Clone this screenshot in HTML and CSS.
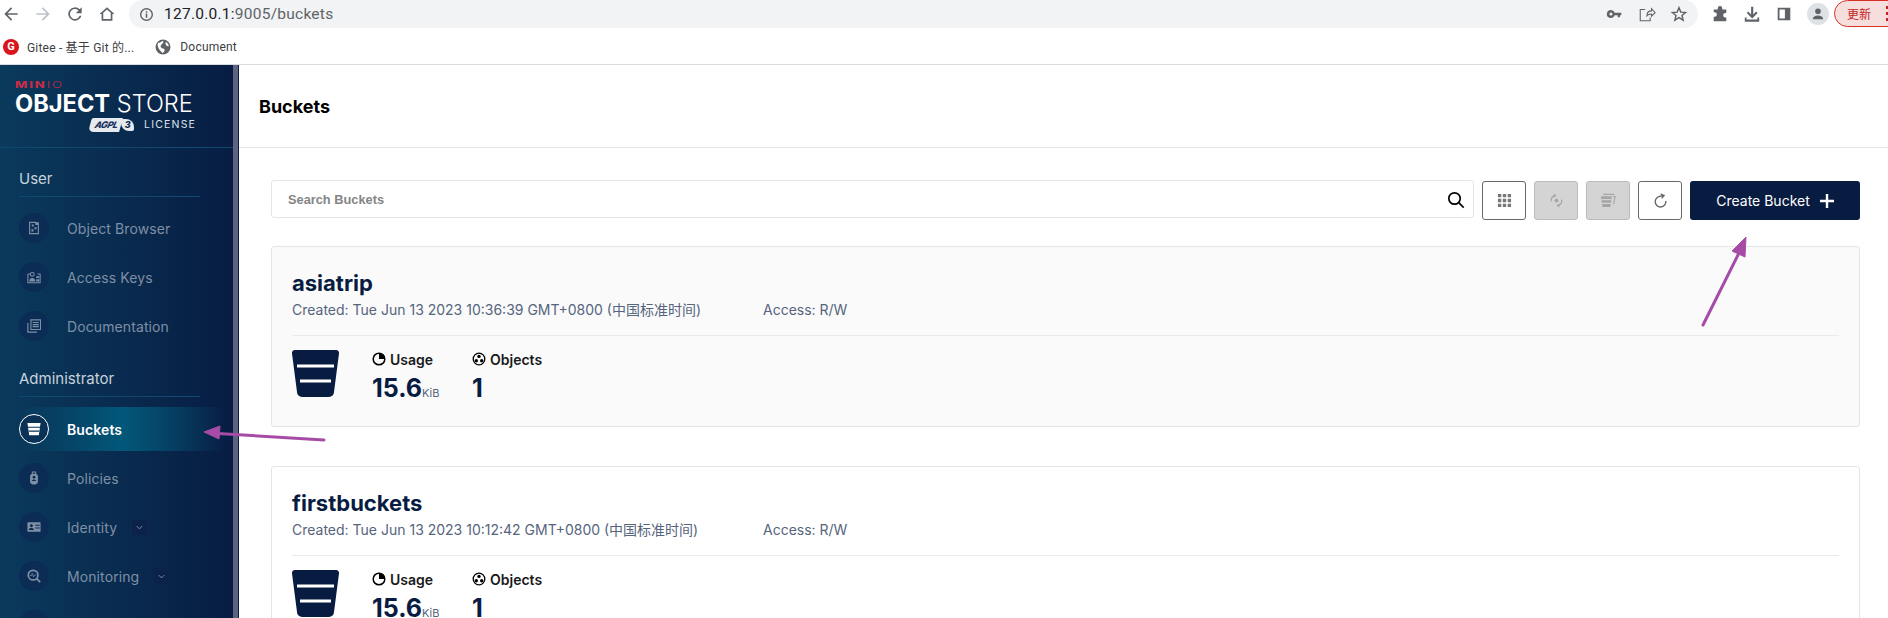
FILE: index.html
```html
<!DOCTYPE html>
<html lang="en">
<head>
    <meta charset="UTF-8">
    <meta name="viewport" content="width=device-width, initial-scale=1.0">
    <title>Buckets</title>
    <link rel="stylesheet" href="styles.css">
</head>
<body>
    <!-- browser toolbar -->
    <div class="toolbar">
        <div class="nav-icons">
            <svg class="nav-icon" viewBox="0 0 24 24"><path d="M20 11H7.8l5.6-5.6L12 4l-8 8 8 8 1.4-1.4L7.8 13H20z" fill="#5f6368"/></svg>
            <svg class="nav-icon" viewBox="0 0 24 24"><path d="M4 11h12.2l-5.6-5.6L12 4l8 8-8 8-1.4-1.4 5.6-5.6H4z" fill="#bdc1c6"/></svg>
            <svg class="nav-icon" viewBox="0 0 24 24"><path d="M17.6 6.4A8 8 0 1 0 19.7 14h-2.1a6 6 0 1 1-1.4-6.2L13 11h7V4z" fill="#5f6368"/></svg>
            <svg class="nav-icon" viewBox="0 0 24 24"><path d="M12 4 3 12h2.5v8h13v-8H21zm4.500 14h-9v-7.600L12 6.600l4.500 3.800z" fill="#5f6368"/></svg>
        </div>
        <div class="omnibox">
            <svg class="info-icon" viewBox="0 0 16 16"><circle cx="8" cy="8" r="6.200" fill="none" stroke="#5f6368" stroke-width="1.500"/><path d="M7.200 7h1.600v4.500H7.200zM7.200 4.500h1.600v1.500H7.200z" fill="#5f6368"/></svg>
            <span class="url">127.0.0.1:<span class="url-dim">9005/buckets</span></span>
            <div class="omni-right">
                <svg class="omni-icon" viewBox="0 0 20 20"><path d="M5.500 5.500a4.500 4.500 0 1 0 4.200 6H13v2h2.500v-2H17V8.500H9.700a4.500 4.500 0 0 0-4.200-3zm0 2.800a1.700 1.700 0 1 1 0 3.400 1.700 1.700 0 0 1 0-3.400z" fill="#5f6368"/></svg>
                <svg class="omni-icon" viewBox="0 0 20 20"><path d="M8 5H2.500v12.500h11V14M10 12c0-3.500 2-5.500 5-5.500V4l4 4.500-4 4V10c-2 0-4 .5-5 2z" fill="none" stroke="#5f6368" stroke-width="1.200"/></svg>
                <svg class="omni-icon" viewBox="0 0 20 20"><path d="m10 3 2 4.900 5.300.4-4 3.400 1.300 5.100-4.600-2.800-4.600 2.800 1.300-5.100-4-3.400 5.300-.4z" fill="none" stroke="#5f6368" stroke-width="1.600"/></svg>
            </div>
        </div>
        <div class="tool-right">
            <svg class="tool-icon" viewBox="0 0 20 20"><path d="M7.500 3.500a2.500 2.500 0 0 1 5 0V5h4.500v4h-1a2.500 2.500 0 0 0 0 5h1v4H3v-5h1a2.500 2.500 0 0 0 0-5H3V5h4.500z" fill="#5f6368"/></svg>
            <svg class="tool-icon" viewBox="0 0 20 20"><path d="M9 2h2.400v8.500l3.200-3.200 1.600 1.600-6 6-6-6 1.600-1.600L9 10.500zM2 14h2v2.200h12V14h2v4.500H2z" fill="#5f6368"/></svg>
            <svg class="tool-icon" viewBox="0 0 20 20"><path d="M3 3h14v14H3zm2 2v10h6V5z" fill="#5f6368" fill-rule="evenodd"/></svg>
            <div class="avatar">
                <svg viewBox="0 0 20 20"><circle cx="10" cy="6.500" r="3.500" fill="#5f6368"/><path d="M3.500 16.500c0-3 3-4.500 6.500-4.500s6.500 1.500 6.500 4.500z" fill="#5f6368"/></svg>
            </div>
            <div class="update-pill">
                <span>更新</span>
                <span class="pill-dots"><i></i><i></i><i></i></span>
            </div>
        </div>
    </div>

    <!-- bookmarks -->
    <div class="bookmarks">
        <div class="bookmark">
            <span class="gitee-logo">G</span>
            <span>Gitee - 基于 Git 的...</span>
        </div>
        <div class="bookmark">
            <svg class="globe" viewBox="0 0 16 16"><circle cx="8" cy="8" r="7.500" fill="#5f6368"/><path d="M3 4c2 0 3-1.500 5-2 1 1 0 2-1 3S5 7 6 8.500s3 .5 3.500 2-1 3-2 3.500C6 12 4 11 3.500 9S2 6 3 4zM11 3c1.500.8 2.500 2.500 2.800 4-1 .5-2.500 0-3-1.500S10.500 4 11 3z" fill="#fff"/></svg>
            <span>Document</span>
        </div>
    </div>

    <div class="app">
        <aside class="sidebar">
            <div class="logo-area">
                <div class="logo-minio">MIN<span class="logo-io">IO</span></div>
                <div class="logo-main"><b>OBJECT</b> STORE</div>
                <div class="logo-license">
                    <span class="agpl"><span class="agpl-text">AGPL</span><span class="agpl-three">3</span></span>
                    <span>LICENSE</span>
                </div>
            </div>
            <div class="menu">
                <div class="menu-title">User</div>
                <div class="menu-item">
                    <span class="menu-circle"><svg viewBox="0 0 16 16"><path d="M3 1.500h7l3 3v10H3z" fill="none" stroke="currentColor" stroke-width="1.300"/><path d="M9.500 1.500h4v3h-4zM5.500 4h2.200v2.200H5.500zM8.500 7h2.500v2.500H8.500zM5 9.500h2.500V12H5z" fill="currentColor"/></svg></span>
                    <span>Object Browser</span>
                </div>
                <div class="menu-item">
                    <span class="menu-circle"><svg viewBox="0 0 16 16"><path d="M1 4.500h3M12 4.500h3v10H1v-10" fill="none" stroke="currentColor" stroke-width="1.200"/><circle cx="6" cy="5" r="2.200" fill="none" stroke="currentColor" stroke-width="1.200"/><path d="M2.500 13c0-5 7-5 7 0zM10.500 7H14v2h-3.500zM10.500 10.500H14V13h-3.500z" fill="currentColor"/></svg></span>
                    <span>Access Keys</span>
                </div>
                <div class="menu-item">
                    <span class="menu-circle"><svg viewBox="0 0 16 16"><path d="M4.500 1h11v11h-11zM1 4.500V15h10.500" fill="none" stroke="currentColor" stroke-width="1.300"/><path d="M6.500 3.500h7v1.200h-7zM6.500 5.800h7V7h-7zM6.500 8.100h7v1.200h-7z" fill="currentColor"/></svg></span>
                    <span>Documentation</span>
                </div>
                <div class="menu-title admin">Administrator</div>
                <div class="menu-item active">
                    <span class="menu-circle"><svg viewBox="0 0 16 16"><path d="M.5 1h15L13.500 15h-11z" fill="currentColor"/><path d="M1 6h14M2 10.500h12" stroke="#0a3156" stroke-width="1.300"/></svg></span>
                    <span>Buckets</span>
                </div>
                <div class="menu-item">
                    <span class="menu-circle"><svg viewBox="0 0 16 16"><path d="M5.500 3V.5h5V3h-1.200V1.800H6.700V3c-2 0-3.200 1.500-3.200 3v6c0 2.500 2 3.500 4.500 3.500s4.500-1 4.500-3.500V6c0-1.500-1.200-3-3.200-3z" fill="currentColor"/><circle cx="8" cy="7" r="1.600" fill="#0a2c50"/><path d="M5.500 11.500c0-2.500 5-2.500 5 0z" fill="#0a2c50"/></svg></span>
                    <span>Policies</span>
                </div>
                <div class="menu-item">
                    <span class="menu-circle"><svg viewBox="0 0 16 16"><path d="M1 2.500h14a1 1 0 0 1 .500.500v10l-.500.500H1L.5 13V3z" fill="currentColor"/><circle cx="5" cy="6.500" r="1.700" fill="#0a2c50"/><path d="M2 11.500c0-3 6-3 6 0zM9.500 5.500h5v1.200h-5zM9.500 8.500h5v1.200h-5z" fill="#0a2c50"/></svg></span>
                    <span>Identity</span>
                    <span class="chevron"><svg viewBox="0 0 10 10"><path d="m2 3.500 3 3 3-3" fill="none" stroke="currentColor" stroke-width="1"/></svg></span>
                </div>
                <div class="menu-item">
                    <span class="menu-circle"><svg viewBox="0 0 16 16"><circle cx="7" cy="7" r="5.500" fill="none" stroke="currentColor" stroke-width="2"/><path d="m10.500 10.500 4.500 4.500" stroke="currentColor" stroke-width="2.200"/><path d="M3.500 7.500h1.500l1-2.500 1.500 4 1-2h2" fill="none" stroke="currentColor" stroke-width=".9"/></svg></span>
                    <span>Monitoring</span>
                    <span class="chevron"><svg viewBox="0 0 10 10"><path d="m2 3.500 3 3 3-3" fill="none" stroke="currentColor" stroke-width="1"/></svg></span>
                </div>
                <div class="menu-item">
                    <span class="menu-circle"></span>
                </div>
            </div>
        </aside>

        <main class="main">
            <div class="page-header">Buckets</div>
            <div class="content">
                <div class="actions">
                    <div class="search">
                        <span>Search Buckets</span>
                        <svg class="search-icon" viewBox="0 0 18 18"><circle cx="7.500" cy="7.500" r="5.700" fill="none" stroke="#000" stroke-width="1.700"/><path d="m11.700 11.700 5 5" stroke="#000" stroke-width="1.700"/></svg>
                    </div>
                    <button class="icon-btn">
                        <svg viewBox="0 0 16 16"><path d="M1 1h3.600v3.600H1zM6.200 1h3.600v3.600H6.200zM11.400 1H15v3.600h-3.600zM1 6.200h3.600v3.600H1zM6.200 6.200h3.600v3.600H6.200zM11.400 6.200H15v3.600h-3.600zM1 11.400h3.600V15H1zM6.200 11.400h3.600V15H6.200zM11.400 11.400H15V15h-3.600z" fill="#777"/></svg>
                    </button>
                    <button class="icon-btn disabled">
                        <svg viewBox="0 0 16 16"><circle cx="8" cy="8" r="2" fill="#a5a5a5"/><path d="M2.500 9A5.500 5.500 0 0 1 6 2.800M13.500 7A5.500 5.500 0 0 1 10 13.200" fill="none" stroke="#a5a5a5" stroke-width="1.300"/><path d="m5 .5 3 2.300-3 2zM11 15.500l-3-2.300 3-2z" fill="#a5a5a5"/></svg>
                    </button>
                    <button class="icon-btn disabled">
                        <svg viewBox="0 0 16 16"><path d="M0 3.500h11.500L10 15H1.500z" fill="#a5a5a5"/><path d="M2.500 1.500H14M12.500 3.500h2.500L13.500 12" fill="none" stroke="#a5a5a5" stroke-width="1.200"/><path d="M.5 7h10.500M1 11h9.500" stroke="#d3d4d3" stroke-width="1.200"/></svg>
                    </button>
                    <button class="icon-btn">
                        <svg viewBox="0 0 16 16"><path d="M8.500 3.500a5.700 5.700 0 1 0 5.200 5" fill="none" stroke="#696969" stroke-width="1.500"/><path d="m8 .2 5 2.300-3.500 3.800z" fill="#696969"/></svg>
                    </button>
                    <button class="create-btn">
                        <span>Create Bucket</span>
                        <svg viewBox="0 0 14 14"><path d="M5.800 0h2.400v5.800H14v2.400H8.200V14H5.800V8.200H0V5.800h5.800z" fill="#fff"/></svg>
                    </button>
                </div>

                <div class="bucket-card highlighted">
                    <div class="bucket-name">asiatrip</div>
                    <div class="bucket-meta">
                        <span class="created">Created: Tue Jun 13 2023 10:36:39 GMT+0800 (中国标准时间)</span>
                        <span>Access: R/W</span>
                    </div>
                    <div class="bucket-stats">
                        <svg class="bucket-icon" viewBox="0 0 47 47"><path d="M3 0h41a3 3 0 0 1 3 3.500L42 42a5 5 0 0 1-5 5H10a5 5 0 0 1-5-5L0 3.500A3 3 0 0 1 3 0z" fill="#081c42"/><path d="M5 16h37M8 31h31" stroke="#fff" stroke-width="3"/></svg>
                        <div class="stat usage">
                            <div class="stat-label">
                                <svg viewBox="0 0 14 14"><circle cx="7" cy="7" r="5.800" fill="none" stroke="#000" stroke-width="1.500"/><path d="M7 7V1.200A5.800 5.800 0 0 1 12.800 7z" fill="#000"/></svg>
                                <span>Usage</span>
                            </div>
                            <div class="stat-value">15.6<span class="stat-unit">KiB</span></div>
                        </div>
                        <div class="stat">
                            <div class="stat-label">
                                <svg viewBox="0 0 14 14"><circle cx="7" cy="7" r="5.800" fill="none" stroke="#000" stroke-width="1.300"/><circle cx="7" cy="4.400" r="1.700"/><circle cx="4.300" cy="8.800" r="1.700"/><circle cx="9.700" cy="8.800" r="1.700"/></svg>
                                <span>Objects</span>
                            </div>
                            <div class="stat-value">1</div>
                        </div>
                    </div>
                </div>

                <div class="bucket-card">
                    <div class="bucket-name">firstbuckets</div>
                    <div class="bucket-meta">
                        <span class="created">Created: Tue Jun 13 2023 10:12:42 GMT+0800 (中国标准时间)</span>
                        <span>Access: R/W</span>
                    </div>
                    <div class="bucket-stats">
                        <svg class="bucket-icon" viewBox="0 0 47 47"><path d="M3 0h41a3 3 0 0 1 3 3.500L42 42a5 5 0 0 1-5 5H10a5 5 0 0 1-5-5L0 3.500A3 3 0 0 1 3 0z" fill="#081c42"/><path d="M5 16h37M8 31h31" stroke="#fff" stroke-width="3"/></svg>
                        <div class="stat usage">
                            <div class="stat-label">
                                <svg viewBox="0 0 14 14"><circle cx="7" cy="7" r="5.800" fill="none" stroke="#000" stroke-width="1.500"/><path d="M7 7V1.200A5.800 5.800 0 0 1 12.800 7z" fill="#000"/></svg>
                                <span>Usage</span>
                            </div>
                            <div class="stat-value">15.6<span class="stat-unit">KiB</span></div>
                        </div>
                        <div class="stat">
                            <div class="stat-label">
                                <svg viewBox="0 0 14 14"><circle cx="7" cy="7" r="5.800" fill="none" stroke="#000" stroke-width="1.300"/><circle cx="7" cy="4.400" r="1.700"/><circle cx="4.300" cy="8.800" r="1.700"/><circle cx="9.700" cy="8.800" r="1.700"/></svg>
                                <span>Objects</span>
                            </div>
                            <div class="stat-value">1</div>
                        </div>
                    </div>
                </div>
            </div>
        </main>
    </div>

    <!-- annotation arrows drawn over the page -->
    <svg class="arrows" viewBox="0 0 1888 618">
        <path d="M324 440 218 433.500" stroke="#a64ca6" stroke-width="3" stroke-linecap="round"/>
        <path d="m204 432 16-6-1 13z" fill="#a64ca6" stroke="#a64ca6"/>
        <path d="m1703 325 37-74" stroke="#a64ca6" stroke-width="3" stroke-linecap="round"/>
        <path d="m1746 237-1 20-13-6z" fill="#a64ca6" stroke="#a64ca6"/>
    </svg>
</body>
</html>
```

FILE: styles.css
```css
* {
    box-sizing: border-box;
}
html, body {
    height: 618px;
}
body {
    margin: 0;
    position: relative;
    overflow: hidden;
    background-color: #fff;
    font-family: Inter, "Noto Sans CJK SC", sans-serif;
}

/* browser chrome */
.toolbar {
    height: 28px;
    display: flex;
    align-items: center;
    font-family: Roboto, "Noto Sans CJK SC", sans-serif;
}
.nav-icons {
    width: 129px;
    flex: none;
    padding-left: 1px;
    display: flex;
    gap: 12px;
}
.nav-icon {
    width: 20px;
    height: 20px;
}
.omnibox {
    width: 1569px;
    flex: none;
    height: 28px;
    padding: 0 10px;
    display: flex;
    align-items: center;
    background-color: #f1f3f4;
    border-radius: 14px;
}
.info-icon {
    width: 15px;
    height: 15px;
}
.url {
    margin-left: 10px;
    font-size: 15.500px;
    letter-spacing: .25px;
    color: #202124;
}
.url-dim {
    color: #5f6368;
}
.omni-right {
    margin-left: auto;
    display: flex;
    gap: 14px;
}
.omni-icon {
    width: 18px;
    height: 18px;
}
.tool-right {
    flex: none;
    width: 190px;
    display: flex;
    align-items: center;
    padding-left: 13px;
    gap: 12px;
}
.tool-icon {
    width: 18px;
    height: 18px;
    margin-right: 2px;
    flex: none;
}
.avatar {
    width: 22px;
    height: 22px;
    flex: none;
    border-radius: 50%;
    background-color: #dee1e6;
    padding: 3px;
}
.avatar svg {
    display: block;
}
.update-pill {
    flex: none;
    width: 72px;
    height: 27px;
    margin-top: -1px;
    margin-left: -7px;
    padding-left: 12px;
    display: flex;
    align-items: center;
    gap: 15px;
    font-size: 12px;
    color: #c5221f;
    background-color: #f6dedc;
    border: 1px solid #d93025;
    border-radius: 14px;
}
.pill-dots {
    display: flex;
    flex-direction: column;
    gap: 3px;
}
.pill-dots i {
    display: block;
    width: 3px;
    height: 3px;
    background-color: #c5221f;
}
.bookmarks {
    height: 37px;
    padding: 1px 0 0 3px;
    display: flex;
    align-items: center;
    gap: 21px;
    border-bottom: 1px solid #dadce0;
    font-family: Roboto, "Noto Sans CJK SC", sans-serif;
    font-size: 12px;
    color: #3c4043;
}
.bookmark {
    display: flex;
    align-items: center;
    gap: 8px;
    letter-spacing: .2px;
}
.gitee-logo {
    width: 16px;
    height: 16px;
    border-radius: 50%;
    background-color: #d8141d;
    color: #fff;
    font-size: 11px;
    font-weight: bold;
    line-height: 16px;
    text-align: center;
}
.globe {
    width: 16px;
    height: 16px;
    margin-right: 1px;
}

/* app */
.app {
    display: flex;
    height: 553px;
}
.sidebar {
    width: 239px;
    flex: none;
    background: linear-gradient(90deg, #0a3a5c 0%, #081c42 100%);
    border-right: 1px solid #081c42;
    box-shadow: inset -5px 0 0 #5d6380;
    overflow: hidden;
    color: #fff;
}
.logo-area {
    height: 83px;
    padding: 15px 0 0 15px;
    width: 233px;
    border-bottom: 1px solid #0f4a6e;
}
.logo-minio {
    font-size: 9px;
    line-height: 9px;
    font-weight: 800;
    letter-spacing: 1.300px;
    color: #c72c48;
    transform: scaleX(1.450);
    transform-origin: left center;
}
.logo-io {
    font-weight: 300;
}
.logo-main {
    margin-top: 2px;
    font-size: 23.600px;
    line-height: 25px;
    font-weight: 300;
    white-space: nowrap;
}
.logo-main b {
    font-weight: 700;
}
.logo-license {
    margin: 1px 0 0 75px;
    display: flex;
    align-items: center;
    gap: 8px;
    font-size: 10.500px;
    letter-spacing: 1.200px;
    line-height: 15px;
    color: #dfe3ea;
}
.agpl {
    width: 46px;
    height: 15px;
    flex: none;
    display: flex;
    align-items: center;
    font-size: 9px;
    font-style: italic;
    font-weight: 800;
    letter-spacing: -.4px;
}
.agpl-text {
    padding: 0 3px 0 5px;
    line-height: 14px;
    color: #16305c;
    background-color: #e6e9ee;
    border-radius: 2px 0 0 5px;
    transform: skewX(-15deg);
}
.agpl-three {
    height: 12px;
    padding: 0 4px;
    line-height: 12px;
    color: #0a2a50;
    background-color: #e6e9ee;
    border-radius: 2px 8px 2px 8px;
}
.menu {
    padding: 20px 0 0 19px;
    width: 233px;
}
.menu-title {
    width: 181px;
    height: 29px;
    font-size: 15px;
    line-height: 22px;
    color: #c8d2dc;
    border-bottom: 1px solid #0f4a6e;
    margin-bottom: 9px;
}
.menu-title.admin {
    margin-top: 20px;
    margin-bottom: 10px;
}
.menu-item {
    height: 44px;
    margin-bottom: 5px;
    display: flex;
    align-items: center;
    gap: 18px;
    font-size: 14px;
    color: #7f8fa6;
    letter-spacing: .1px;
}
.menu-item.active {
    margin-right: 8px;
    font-weight: 600;
    color: #fff;
    background: linear-gradient(90deg, rgba(2, 88, 122, 0) 0%, #02587a 50%, rgba(2, 88, 122, 0) 100%);
}
.menu-circle {
    width: 30px;
    height: 30px;
    flex: none;
    border-radius: 50%;
    background-color: #0a2c55;
    display: flex;
    align-items: center;
    justify-content: center;
}
.menu-circle svg {
    width: 14px;
    height: 14px;
}
.menu-item.active .menu-circle {
    background-color: #0a3156;
    border: 1px solid #fff;
}
.chevron {
    width: 15px;
    height: 15px;
    margin-left: -3px;
    padding: 3px;
    color: #8fa0b8;
    background-color: #0c2248;
}
.chevron svg {
    display: block;
}

/* main area */
.main {
    flex: 1;
    min-width: 0;
}
.page-header {
    height: 83px;
    padding: 32px 0 0 20px;
    font-size: 18px;
    font-weight: 700;
    line-height: 20px;
    color: #000;
    border-bottom: 1px solid #e5e5e5;
}
.content {
    padding: 33px 28px 0 32px;
}
.actions {
    display: flex;
    align-items: center;
    gap: 8px;
    height: 39px;
    margin-bottom: 26px;
}
.search {
    flex: 1;
    height: 38px;
    margin-top: -4px;
    padding: 2px 8px 0 16px;
    display: flex;
    align-items: center;
    justify-content: space-between;
    border: 1px solid #e5e5e5;
    border-radius: 3px;
    font-family: "Liberation Sans", sans-serif;
    font-size: 12.800px;
    font-weight: bold;
    color: #858585;
}
.search-icon {
    width: 18px;
    height: 18px;
}
.icon-btn {
    width: 44px;
    height: 39px;
    padding: 0;
    display: flex;
    align-items: center;
    justify-content: center;
    background-color: #fff;
    border: 1px solid #696969;
    border-radius: 3px;
}
.icon-btn svg {
    width: 15px;
    height: 15px;
}
.icon-btn.disabled {
    background-color: #d3d4d3;
    border-color: #bbb;
}
.create-btn {
    width: 170px;
    height: 39px;
    padding: 0;
    display: flex;
    align-items: center;
    justify-content: center;
    gap: 10px;
    background-color: #081c42;
    color: #fff;
    border: none;
    border-radius: 3px;
    font-family: Inter, sans-serif;
    font-size: 14px;
}
.create-btn svg {
    width: 14px;
    height: 14px;
}
.bucket-card {
    height: 181px;
    margin-bottom: 39px;
    padding: 22px 20px 0;
    border: 1px solid #e5e5e5;
    border-radius: 3px;
    overflow: visible;
}
.bucket-card.highlighted {
    background-color: #fafafa;
}
.bucket-name {
    font-size: 22px;
    line-height: 28px;
    font-weight: 700;
    color: #081c42;
}
.bucket-meta {
    display: flex;
    margin-top: 3px;
    padding-bottom: 15px;
    font-size: 14px;
    line-height: 20px;
    color: #56647d;
    border-bottom: 1px solid #eaeaea;
}
.created {
    width: 471px;
    white-space: nowrap;
}
.bucket-stats {
    display: flex;
    padding-top: 14px;
}
.bucket-icon {
    width: 47px;
    height: 47px;
    margin-right: 33px;
}
.stat {
    padding-top: 1px;
}
.stat.usage {
    width: 100px;
}
.stat-label {
    display: flex;
    align-items: center;
    gap: 4px;
    font-size: 14px;
    font-weight: 600;
    line-height: 18px;
    color: #1a1a1a;
}
.stat-label svg {
    width: 14px;
    height: 14px;
    margin-top: -2px;
}
.stat-value {
    margin-top: 3px;
    font-size: 25px;
    line-height: 32px;
    font-weight: 700;
    color: #081c42;
}
.stat-unit {
    font-size: 11px;
    font-weight: 400;
    color: #56647d;
}

/* arrows lie over everything */
.arrows {
    position: absolute;
    left: 0;
    top: 0;
    width: 1888px;
    height: 618px;
    pointer-events: none;
}
```
